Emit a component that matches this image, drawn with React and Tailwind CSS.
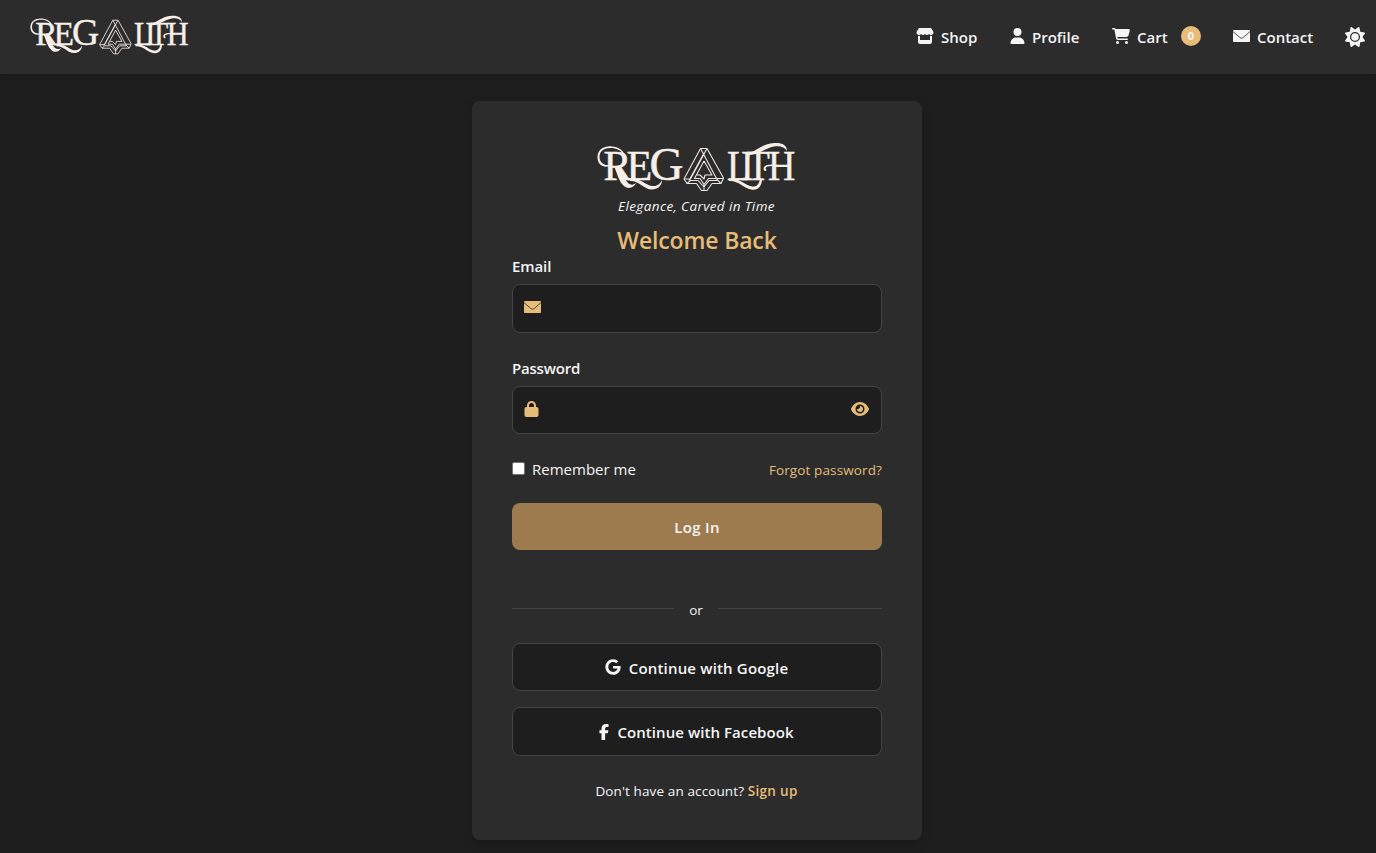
import { FaStore, FaUser, FaCartShopping, FaSun, FaLock, FaEye, FaGoogle, FaFacebookF } from "react-icons/fa6";

function Envelope({ className }) {
  return (
    <svg viewBox="0 0 17 12" className={className} aria-hidden="true">
      <rect width="17" height="12" rx="0.8" fill="currentColor" />
      <path d="M0 1.6 6.9 7.6Q8.5 8.9 10.1 7.6L17 1.6" fill="none" stroke="#2a2723" strokeWidth="0.8" />
    </svg>
  );
}

function Logo({ className }) {
  return (
    <svg viewBox="0 0 200 50" className={`overflow-visible ${className}`} role="img" aria-label="Regalith">
      <g fill="#f5efe8" fontFamily="'Liberation Serif', serif" fontSize="42" stroke="#f5efe8" strokeWidth="0.5">
        <text y="37.5" x="6.500 29.500 52.500">RE<tspan fontSize="47">G</tspan></text>
        <text transform="scale(0.9 1)" y="37.500" x="144.500 160 166.500 190">LITH</text>
      </g>
      <g fill="#f5efe8">
        <path d="M14 23.500C6 27 0 22 0.500 14.500C1 7 8 3.500 15 4.500C21 5 26 8 28 13L26.500 13C24 8 19 6 14 6C7 6 2.500 9 2.500 15C2.500 21 8 24.500 14 22.500Z" />
        <path d="M17 24L21 24C25 31 27 37 31 41C34 43.500 37 43 39.500 40.500C37 46 31 47.500 27 44C22 40 20 31 17 24Z" />
        <path d="M33 37C45 36 48 43 55 44C60 44.500 63 42 65 38C65 44 60 48 54 47.500C46 46.500 42 38.500 33 39Z" />
        <path d="M132 37C144 36 147 43 155 44.500C160 45 162 42 163 37L165 37C165 44 161 49 154 47.500C146 46 142 38.500 132 39Z" />
        <path d="M149 11C158 11 163 2 177 1C185 0.500 190 3 190 9C188 5 183 3.500 177 4.500C168 6 162 13 151 13Z" />
        <path d="M182 23L182 24.500C174 23.500 169 24 168.500 26.500C169 27 170 28 169 29C167 29.500 166 27 167 25C169 22 174 22 182 23Z" />
      </g>
      <g fill="none" stroke="#eae4de" strokeWidth="1.1" strokeLinejoin="round">
        <path d="M103.500 6.500H110L126.500 36 124 41.500H115L110 48.500H104.500L99.500 41.500H90L87 37Z" />
        <path d="M103.500 6.500 106.500 12 92 38.500M110 6.500 93.500 37H87M106.500 12 120 37.500 124 41.500M107 19 97.500 36.500H103L107 42.500 111.500 36.500H126M107 19 115 33H108L107 37 103 33H100M90 41.500 93.500 38.500H101L107 45 112 38.500H120M107 42.500V48.500" />
      </g>
    </svg>
  );
}

function NavLink({ icon, label, className }) {
  return (
    <a href="#" className={`flex items-center gap-[7px] ${className}`}>
      {icon}
      <span className="relative top-px">{label}</span>
    </a>
  );
}

function Header() {
  return (
    <header className="flex h-[74px] items-start justify-between bg-[#2c2c2c] pl-[30px] pr-[11px] shadow-[0_2px_8px_rgba(0,0,0,0.15)]">
      <Logo className="mt-[15px] h-10 w-40" />
      <nav className="flex h-[72px] items-center text-[15px] font-semibold">
        <NavLink className="w-[94px]" icon={<FaStore className="h-4 w-[18px]" />} label="Shop" />
        <NavLink className="w-[102px]" icon={<FaUser className="h-4 w-[15px]" />} label="Profile" />
        <a href="#" className="flex w-[121px] items-center">
          <FaCartShopping className="mr-[7px] h-4 w-[18px]" />
          <span className="relative top-px mr-3 w-8">Cart</span>
          <span className="flex size-5 items-center justify-center rounded-full bg-[#e6bc78] pt-px text-[11px] font-bold">0</span>
        </a>
        <NavLink className="w-[112px]" icon={<Envelope className="h-3 w-[17px]" />} label="Contact" />
        <FaSun className="relative top-px size-5" />
      </nav>
    </header>
  );
}

const field = "flex items-center justify-between rounded-lg border border-[#444] bg-[#1e1e1e] px-[11px] text-[#e6bc78]";
const social = "flex items-center justify-center rounded-lg border border-[#444] bg-[#1e1e1e] pr-px text-[15px] font-semibold";

export default function App() {
  return (
    <div className="min-h-[853px] bg-[#1e1e1e] font-['Open_Sans',sans-serif] text-[#f5f5f5]">
      <Header />
      <main className="flex justify-center pl-[18px] pt-[27px]">
        <section className="flex h-[739px] w-[450px] flex-col rounded-lg bg-[#2c2c2c] px-10 pt-[41px] shadow-[0_4px_12px_rgba(0,0,0,0.2)]">
          <Logo className="h-[50px] w-[200px] self-center" />
          <p className="mt-1 h-5 pr-px text-center text-[13.5px] leading-5 italic tracking-[0.38px]">Elegance, Carved in Time</p>
          <h1 className="mt-2 h-8 text-center text-[23px] leading-8 font-semibold tracking-[-0.15px] text-[#e6bc78]">Welcome Back</h1>
          <label className="-mt-0.5 h-6 text-[15px] leading-6 font-semibold tracking-[-0.1px]">Email</label>
          <div className={`${field} mt-1.5 h-[49px] pb-[3px]`}>
            <Envelope className="h-3 w-[17px]" />
          </div>
          <label className="mt-[23px] h-6 text-[15px] leading-6 font-semibold tracking-[-0.2px]">Password</label>
          <div className={`${field} mt-1.5 h-12 pb-[3px]`}>
            <FaLock className="h-4 w-[15px]" />
            <FaEye className="mr-px h-4 w-[18px]" />
          </div>
          <div className="mt-6 flex h-6 items-center justify-between">
            <label className="flex items-center gap-[7px] pb-0.5 text-[15px]">
              <span className="mb-px size-[13px] rounded-[2px] border border-[#767676] bg-white" />
              Remember me
            </label>
            <a href="#" className="text-[13.5px] tracking-[0.12px] text-[#e6bc78]">Forgot password?</a>
          </div>
          <button className="mt-[21px] h-[47px] rounded-lg bg-[#9e7b4f] pt-px text-[15px] font-semibold tracking-[0.3px]">Log In</button>
          <div className="mt-[49px] flex h-[21px] items-center justify-between">
            <span className="mb-0.5 h-px w-[162px] bg-[#444]" />
            <span className="pt-0.5 text-[13.5px]">or</span>
            <span className="mb-0.5 h-px w-[164px] bg-[#444]" />
          </div>
          <button className={`${social} mt-[23px] h-12`}>
            <FaGoogle className="mr-2 size-4" />
            <span className="relative top-px tracking-[0.17px]">Continue with Google</span>
          </button>
          <button className={`${social} mt-4 h-[49px]`}>
            <FaFacebookF className="mr-2 h-4 w-[10px]" />
            <span className="relative top-px tracking-[0.07px]">Continue with Facebook</span>
          </button>
          <p className="mt-[25px] pr-px text-center text-[13.5px] leading-5 tracking-[0.12px]">
            Don't have an account? <a href="#" className="font-semibold tracking-[0.3px] text-[#e6bc78]">Sign up</a>
          </p>
        </section>
      </main>
    </div>
  );
}
